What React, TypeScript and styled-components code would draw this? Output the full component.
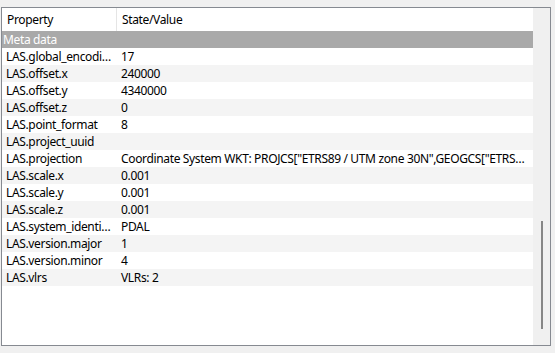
import styled, { createGlobalStyle } from 'styled-components';

const GlobalStyle = createGlobalStyle`
  html, body {
    margin: 0;
    padding: 0;
    background: #f0f0f0;
  }
  body {
    font-family: 'Noto Sans', 'Liberation Sans', sans-serif;
    font-size: 12px;
    letter-spacing: -0.35px;
    color: #000;
  }
`;

const Frame = styled.div`
  display: flex;
  box-sizing: border-box;
  width: 550px;
  height: 339px;
  margin: 7px 0 0 1px;
  border: 1px solid #868a91;
  background: #fff;
`;

const Viewport = styled.div`
  flex: 1;
  min-width: 0;
  display: flex;
  flex-direction: column;
`;

const Header = styled.div`
  display: grid;
  grid-template-columns: 115px 1fr;
  height: 23px;
  background: #fff;
`;

const HeaderCell = styled.div<{ $divider?: boolean }>`
  display: flex;
  align-items: center;
  padding-left: 5px;
  border-right: ${({ $divider }) => ($divider ? '1px solid #e5e5e5' : 'none')};
  white-space: nowrap;
`;

const Section = styled.div`
  height: 17px;
  line-height: 17px;
  padding-left: 1px;
  background: #a9a9a9;
  color: #fff;
`;

const Row = styled.div<{ $alt: boolean }>`
  display: grid;
  grid-template-columns: 115px 1fr;
  height: 17px;
  line-height: 17px;
  background: ${({ $alt }) => ($alt ? '#f4f4f4' : '#fff')};
`;

const Cell = styled.div`
  padding: 0 4px;
  white-space: nowrap;
  overflow: hidden;
  text-overflow: ellipsis;
`;

const ScrollBar = styled.div`
  width: 17px;
  background: #f0f0f0;
  display: flex;
  justify-content: center;
`;

const Thumb = styled.div`
  width: 2px;
  height: 108px;
  margin: 213px 0 0 1px;
  background: #868686;
`;

const rows: [string, string][] = [
  ['LAS.global_encoding', '17'],
  ['LAS.offset.x', '240000'],
  ['LAS.offset.y', '4340000'],
  ['LAS.offset.z', '0'],
  ['LAS.point_format', '8'],
  ['LAS.project_uuid', ''],
  [
    'LAS.projection',
    'Coordinate System WKT: PROJCS["ETRS89 / UTM zone 30N",GEOGCS["ETRS89",DATUM["European_Terrestrial_Reference_System_1989"]]]',
  ],
  ['LAS.scale.x', '0.001'],
  ['LAS.scale.y', '0.001'],
  ['LAS.scale.z', '0.001'],
  ['LAS.system_identifier', 'PDAL'],
  ['LAS.version.major', '1'],
  ['LAS.version.minor', '4'],
  ['LAS.vlrs', 'VLRs: 2'],
];

function App() {
  return (
    <>
      <GlobalStyle />
      <Frame>
        <Viewport>
          <Header>
            <HeaderCell $divider>Property</HeaderCell>
            <HeaderCell>State/Value</HeaderCell>
          </Header>
          <Section>Meta data</Section>
          {rows.map(([name, value], idx) => (
            <Row key={name} $alt={idx % 2 === 1}>
              <Cell>{name}</Cell>
              <Cell>{value}</Cell>
            </Row>
          ))}
        </Viewport>
        <ScrollBar>
          <Thumb />
        </ScrollBar>
      </Frame>
    </>
  );
}

export default App;
